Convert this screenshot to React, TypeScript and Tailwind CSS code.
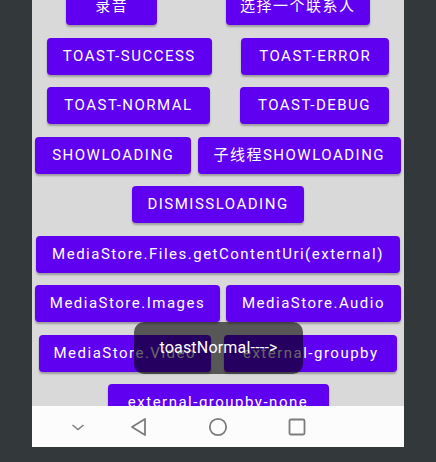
import React from "react";

const FONT = { fontFamily: "Roboto, 'Noto Sans CJK SC', sans-serif" };

function Btn({ w, label }: { w: string; label: string }) {
  return (
    <div
      className={`${w} h-[37px] shrink-0 rounded-[4px] bg-[#6000f0] shadow-[0_2px_2px_rgba(0,0,0,0.28)] flex items-center justify-center text-white text-[15px] font-normal tracking-[1.5px] whitespace-nowrap overflow-hidden`}
    >
      {label}
    </div>
  );
}

function Row({ children }: { children: React.ReactNode }) {
  return <div className="flex justify-around w-full">{children}</div>;
}

export default function App() {
  return (
    <div className="w-[436px] h-[462px] bg-[#33383b] flex flex-col" style={FONT}>
      <div className="mx-[32px] w-[372px] h-[447px] flex flex-col relative">
        <div className="h-[406px] bg-[#d9d9d9] overflow-hidden">
          <div className="flex flex-col gap-[12.5px] mt-[-12px]">
            <Row>
              <Btn w="w-[91px]" label="录音" />
              <Btn w="w-[144px]" label="选择一个联系人" />
            </Row>
            <Row>
              <Btn w="w-[165px]" label="TOAST-SUCCESS" />
              <Btn w="w-[148px]" label="TOAST-ERROR" />
            </Row>
            <Row>
              <Btn w="w-[163px]" label="TOAST-NORMAL" />
              <Btn w="w-[149px]" label="TOAST-DEBUG" />
            </Row>
            <Row>
              <Btn w="w-[156px]" label="SHOWLOADING" />
              <Btn w="w-[203px]" label="子线程SHOWLOADING" />
            </Row>
            <Row>
              <Btn w="w-[172px]" label="DISMISSLOADING" />
            </Row>
            <Row>
              <Btn w="w-[364px]" label="MediaStore.Files.getContentUri(external)" />
            </Row>
            <Row>
              <Btn w="w-[185px]" label="MediaStore.Images" />
              <Btn w="w-[175px]" label="MediaStore.Audio" />
            </Row>
            <Row>
              <Btn w="w-[172px]" label="MediaStore.Video" />
              <Btn w="w-[173px]" label="external-groupby" />
            </Row>
            <Row>
              <Btn w="w-[221px]" label="external-groupby-none" />
            </Row>
          </div>
        </div>
        <div className="h-[41px] bg-[#fcfcfc] flex items-center pl-[36px]">
          <svg width="20" height="20" viewBox="0 0 20 20">
            <path d="M4.5 8 L10 12.5 L15.5 8" fill="none" stroke="#7c7c7c" strokeWidth="1.5" />
          </svg>
          <svg width="20" height="20" viewBox="0 0 20 20" className="ml-[41px]">
            <path d="M16 2 L16 18 L3 10 Z" fill="none" stroke="#7c7c7c" strokeWidth="1.8" strokeLinejoin="round" />
          </svg>
          <svg width="20" height="20" viewBox="0 0 20 20" className="ml-[59px]">
            <circle cx="10" cy="10" r="8.2" fill="none" stroke="#7c7c7c" strokeWidth="1.8" />
          </svg>
          <svg width="20" height="20" viewBox="0 0 20 20" className="ml-[59px]">
            <rect x="2.5" y="2.5" width="15" height="15" rx="1.5" fill="none" stroke="#7c7c7c" strokeWidth="1.8" />
          </svg>
        </div>
        <div className="absolute left-[102px] top-[322px] w-[169px] h-[52px] rounded-[10px] bg-black/60 flex items-center justify-center text-white text-[16px] tracking-[0.2px] pb-[1px]">
          toastNormal----&gt;
        </div>
      </div>
    </div>
  );
}
